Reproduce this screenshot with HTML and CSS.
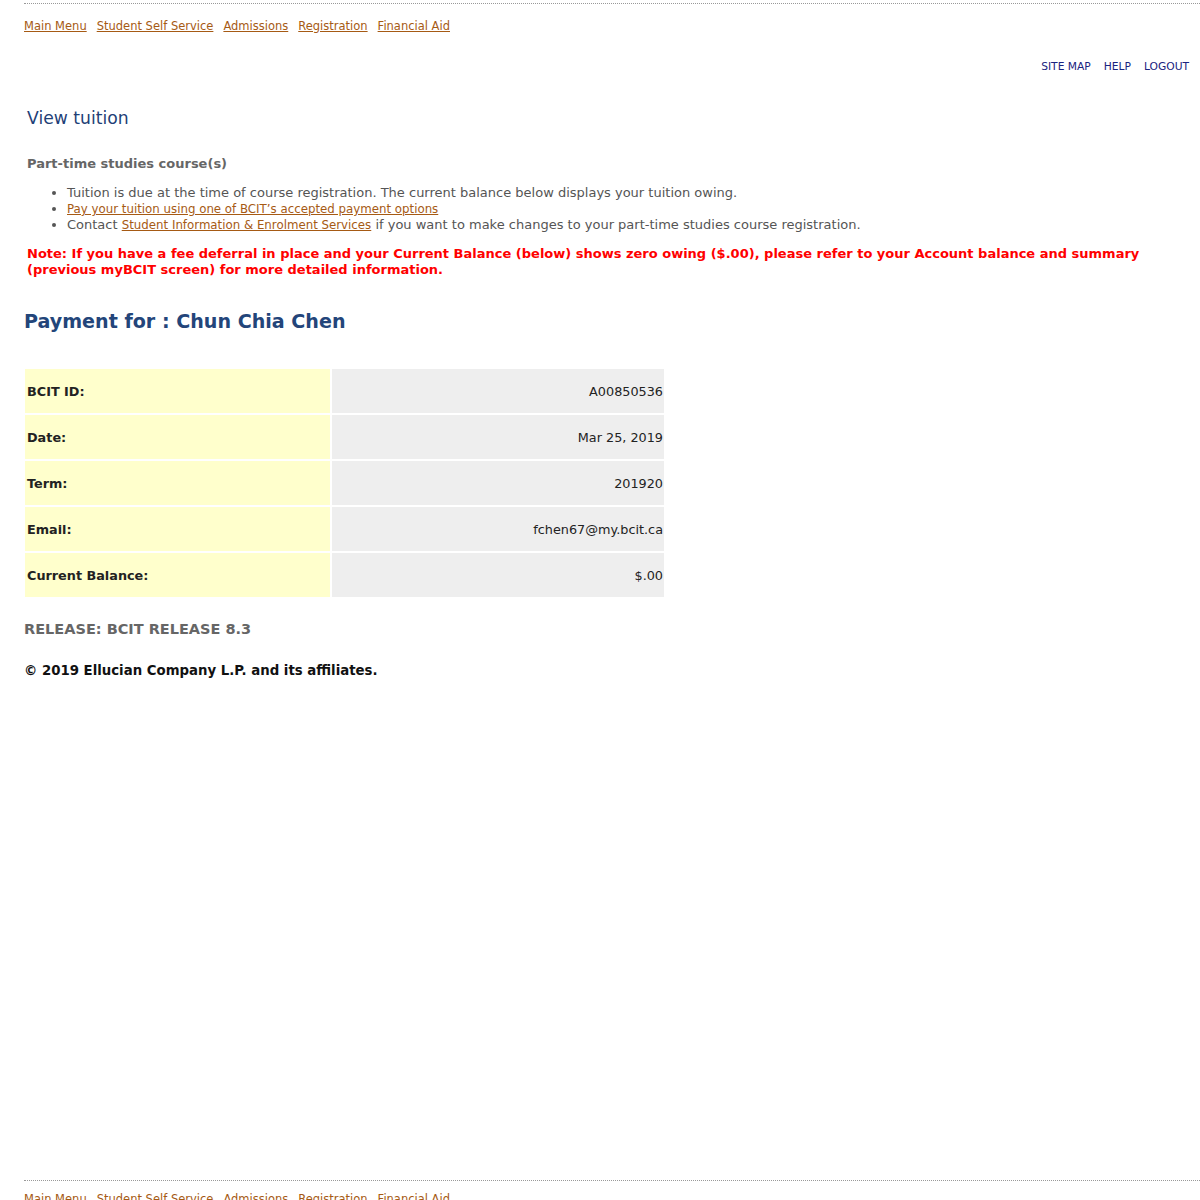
FILE: index.html
```html
<!DOCTYPE html>
<html lang="en">
<head>
<meta charset="utf-8">
<title>View tuition</title>
<link rel="stylesheet" href="styles.css">
</head>
<body>
<div class="page">
  <div class="topbar">
    <nav class="menu">
      <a href="#">Main Menu</a>
      <a href="#">Student Self Service</a>
      <a href="#">Admissions</a>
      <a href="#">Registration</a>
      <a href="#">Financial Aid</a>
    </nav>
  </div>
  <div class="util">
    <a href="#">SITE MAP</a>
    <a href="#">HELP</a>
    <a href="#">LOGOUT</a>
  </div>
  <main class="main">
    <h1 class="title">View tuition</h1>
    <h3 class="sub">Part-time studies course(s)</h3>
    <ul class="info">
      <li>Tuition is due at the time of course registration. The current balance below displays your tuition owing.</li>
      <li><a href="#">Pay your tuition using one of BCIT’s accepted payment options</a></li>
      <li>Contact <a href="#">Student Information &amp; Enrolment Services</a> if you want to make changes to your part-time studies course registration.</li>
    </ul>
    <p class="note">Note: If you have a fee deferral in place and your Current Balance (below) shows zero owing ($.00), please refer to your Account balance and summary (previous myBCIT screen) for more detailed information.</p>
    <h2 class="payfor">Payment for : Chun Chia Chen</h2>
    <table class="details">
      <tr><th>BCIT ID:</th><td>A00850536</td></tr>
      <tr><th>Date:</th><td>Mar 25, 2019</td></tr>
      <tr><th>Term:</th><td>201920</td></tr>
      <tr><th>Email:</th><td>fchen67@my.bcit.ca</td></tr>
      <tr><th>Current Balance:</th><td>$.00</td></tr>
    </table>
    <p class="release">RELEASE: BCIT RELEASE 8.3</p>
    <p class="copy">© 2019 Ellucian Company L.P. and its affiliates.</p>
  </main>
  <div class="bottombar">
    <nav class="menu">
      <a href="#">Main Menu</a>
      <a href="#">Student Self Service</a>
      <a href="#">Admissions</a>
      <a href="#">Registration</a>
      <a href="#">Financial Aid</a>
    </nav>
  </div>
</div>
</body>
</html>
```
FILE: styles.css
```css
html, body {
  margin: 0;
  padding: 0;
  background: #ffffff;
}
body {
  font-family: "DejaVu Sans", Verdana, sans-serif;
  color: #333333;
}
.page {
  padding-top: 3px;
}
.topbar, .bottombar {
  margin-left: 24px;
  border-top: 1px dotted #999999;
}
.menu {
  display: flex;
  gap: 10px;
  padding-top: 14px;
  font-size: 11.5px;
  line-height: 16px;
}
.menu a {
  color: #a65a14;
  text-decoration: underline;
}
.util {
  display: flex;
  justify-content: flex-end;
  gap: 13px;
  padding: 26px 11px 0 0;
  font-size: 10.7px;
  line-height: 14px;
}
.util a {
  color: #1a2380;
  text-decoration: none;
}
.main {
  min-height: 1073px;
  box-sizing: border-box;
  padding-left: 24px;
}
.title {
  margin: 33px 0 0 3px;
  font-size: 17.2px;
  font-weight: normal;
  line-height: 22px;
  color: #1f3f77;
}
.sub {
  margin: 27px 0 0 3px;
  font-size: 13px;
  line-height: 16px;
  color: #666666;
  font-weight: bold;
}
.info {
  margin: 13px 0 0;
  padding-left: 43px;
  font-size: 13px;
  line-height: 16px;
  color: #555555;
}
.info a {
  color: #a65a14;
  font-size: 11.8px;
}
.note {
  margin: 13px 0 0 3px;
  font-size: 13px;
  line-height: 16px;
  font-weight: bold;
  color: #ff0000;
}
.payfor {
  margin: 31px 0 0;
  font-size: 19.1px;
  line-height: 26px;
  font-weight: bold;
  color: #23457a;
}
.details {
  margin: 32px 0 0 -1px;
  border-spacing: 2px;
  width: 643px;
  font-size: 12.8px;
}
.details th {
  width: 301px;
  height: 44px;
  padding: 0 2px;
  text-align: left;
  font-weight: bold;
  background: #ffffcc;
  color: #222222;
}
.details td {
  height: 44px;
  padding: 0 1px 0 0;
  text-align: right;
  background: #eeeeee;
  color: #222222;
}
.release {
  margin: 21px 0 0;
  font-size: 14.5px;
  line-height: 18px;
  font-weight: bold;
  color: #666666;
}
.copy {
  margin: 25px 0 0;
  font-size: 13.3px;
  line-height: 16px;
  font-weight: bold;
  color: #111111;
}
.bottombar .menu {
  padding-top: 10px;
}
```
